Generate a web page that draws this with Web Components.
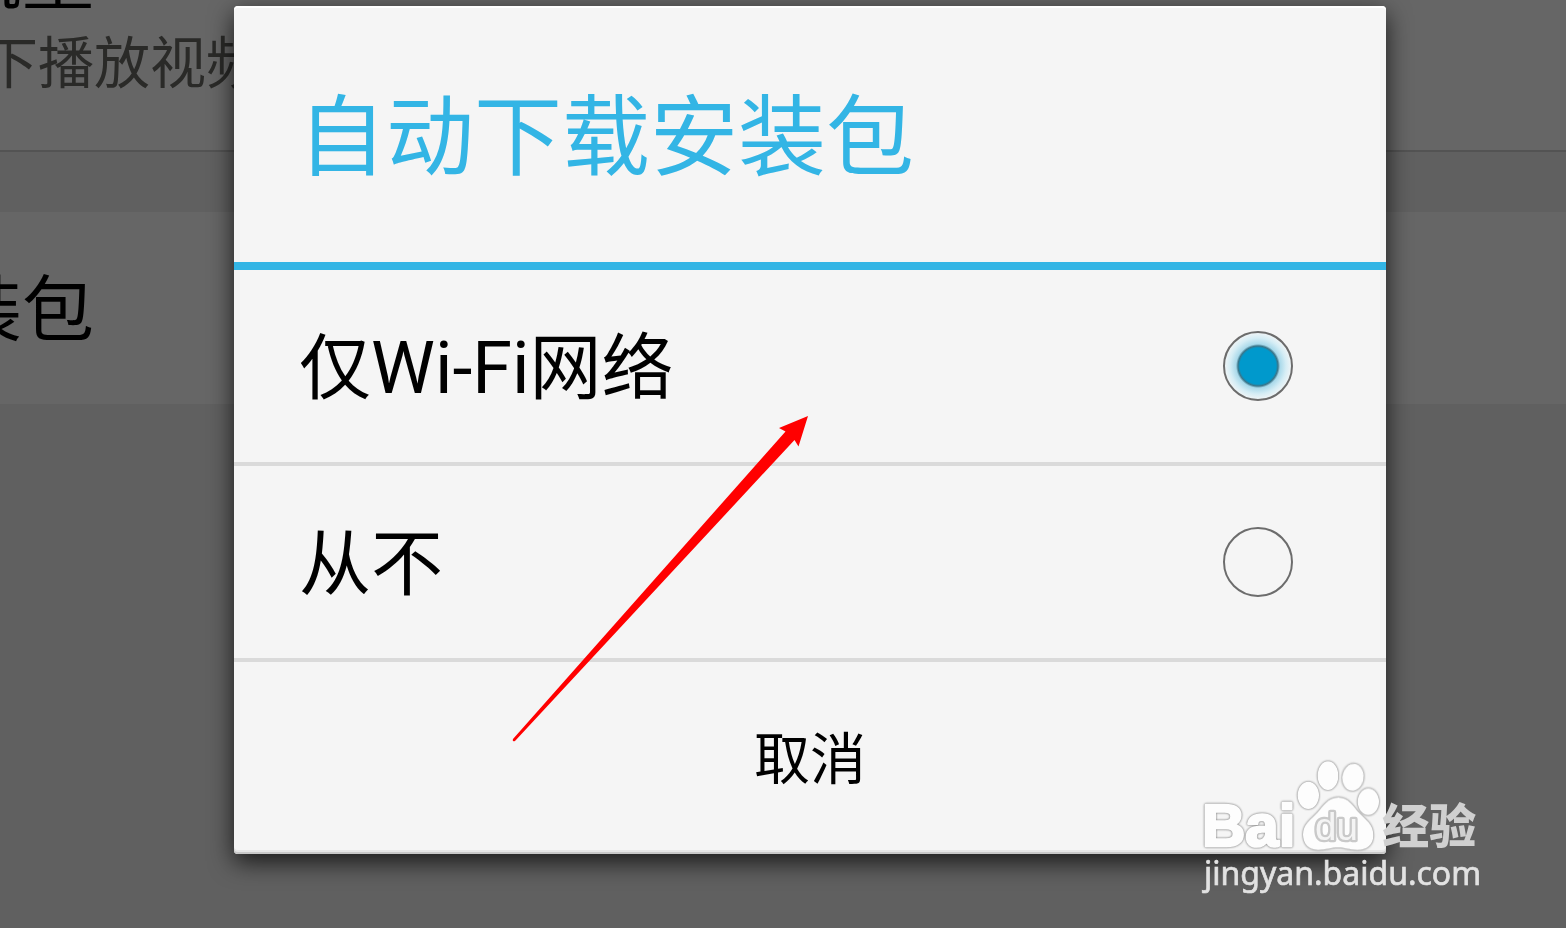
<!DOCTYPE html>
<html lang="zh-CN">
<head>
<meta charset="utf-8">
<title>自动下载安装包</title>
<style>
html, body { height: 100%; margin: 0; }
body {
  background: #606060;
  overflow: hidden;
  font-family: Roboto, "Noto Sans CJK SC", sans-serif;
  color: #000;
}
</style>
</head>
<body>
<app-screen>
  <settings-item slot="page" class="first">
    流量
    <span slot="detail">下播放视频</span>
  </settings-item>
  <settings-item slot="page">装包</settings-item>

  <choice-dialog slot="dialog" heading="自动下载安装包">
    <choice-option label="仅Wi-Fi网络" selected></choice-option>
    <choice-option label="从不"></choice-option>
    <dialog-button slot="actions">取消</dialog-button>
  </choice-dialog>

  <pointer-arrow slot="overlay"></pointer-arrow>
  <site-watermark slot="overlay"></site-watermark>
</app-screen>

<script>
const define = (name, html, setup) => {
  const template = document.createElement('template');
  template.innerHTML = html;
  customElements.define(name, class extends HTMLElement {
    constructor() {
      super();
      this.attachShadow({ mode: 'open' }).append(template.content.cloneNode(true));
    }
    connectedCallback() { if (setup) setup(this, this.shadowRoot); }
  });
};

define('app-screen', `
  <style>
    :host { display: block; position: relative; min-height: 100%; height: 100%; overflow: hidden; }
    main { display: flex; flex-direction: column; gap: 60px; }
    .layer { position: absolute; inset: 0; padding: 6px 180px 0 234px; }
  </style>
  <main><slot name="page"></slot></main>
  <div class="layer"><slot name="dialog"></slot></div>
  <slot name="overlay"></slot>
`);

define('settings-item', `
  <style>
    :host { display: block; background: #666; padding: 63px 0 57px; font-size: 72px; line-height: 72px; white-space: nowrap; }
    :host(.first) { margin-top: -120px; padding-bottom: 56px; border-bottom: 2px solid #535353; }
    .title { margin-left: -50px; }
    .detail { margin: 20px 0 0 -18px; font-size: 56px; line-height: 59px; color: #2a2a28; }
    .detail:not(.used) { display: none; }
  </style>
  <div class="title"><slot></slot></div>
  <div class="detail"><slot name="detail"></slot></div>
`, (host, root) => {
  const detail = root.querySelector('.detail');
  detail.classList.toggle('used', !!host.querySelector('[slot=detail]'));
});

define('choice-dialog', `
  <style>
    :host { display: block; }
    section {
      position: relative; background: #f5f5f5; border-radius: 4px;
      box-shadow: 0 8px 24px rgba(0,0,0,.75), inset 0 -2px #c8c8c8, inset 0 -4px #e6e6e6, inset 0 2px #fff;
    }
    h1 {
      margin: 0; padding: 88px 64px 80px; font-size: 88px; line-height: 88px;
      font-weight: 400; color: #33b5e5; border-bottom: 8px solid #33b5e5;
    }
  </style>
  <section role="dialog" aria-labelledby="heading">
    <h1 id="heading"></h1>
    <slot></slot>
    <slot name="actions"></slot>
  </section>
`, (host, root) => { root.querySelector('h1').textContent = host.getAttribute('heading'); });

define('choice-option', `
  <style>
    :host { display: block; border-bottom: 4px solid #dadada; }
    label {
      display: flex; align-items: center; justify-content: space-between;
      padding: 0 93px 0 65px; font-size: 72px; line-height: 72px;
    }
    span { padding: 63px 0 57px; }
    input {
      appearance: none; box-sizing: border-box; width: 70px; height: 70px; margin: 0;
      border: 2px solid #6c6c6c; border-radius: 50%;
    }
    input:checked {
      background: radial-gradient(circle, #0099cc 18px, #3b7589 20px, #a9d9ea 22px, #d5edf5 28px, #eef4f6 33px);
    }
  </style>
  <label><span></span><input type="radio"></label>
`, (host, root) => {
  root.querySelector('span').textContent = host.getAttribute('label');
  root.querySelector('input').checked = host.hasAttribute('selected');
});

define('dialog-button', `
  <style>
    :host { display: block; }
    button {
      display: block; width: 100%; margin: 0; padding: 66px 0 62px; border: 0; background: none;
      font: inherit; font-size: 56px; line-height: 64px; color: #000;
    }
  </style>
  <button type="button"><slot></slot></button>
`);

define('pointer-arrow', `
  <style>
    :host { position: absolute; left: 508px; top: 412px; pointer-events: none; }
    svg { display: block; }
  </style>
  <svg width="304" height="334" viewBox="508 412 304 334" aria-hidden="true">
    <path d="M513 739L785.500 431.500L779 428L808 416L798.500 446.500L794.500 440L515 741Q512 742 513 739Z" fill="#f00"/>
  </svg>
`);

define('site-watermark', `
  <style>
    :host { position: absolute; left: 1196px; top: 756px; pointer-events: none; }
    svg { display: block; }
    .white { filter: drop-shadow(0 0 3px #888) drop-shadow(0 0 2px #bbb); }
    .brand { font: 700 180px "Liberation Sans", sans-serif; }
    .cn { font: 900 141px "Noto Sans CJK SC", sans-serif; }
    .url { font: 400 96px "Noto Sans", sans-serif; }
    .du { font: 400 116px "Liberation Sans", sans-serif; }
  </style>
  <svg width="290" height="140" viewBox="48 48 870 420">
    <g class="white" fill="#fdfdfd">
      <text class="brand" x="66" y="319" stroke="#fdfdfd" stroke-width="8" stroke-linejoin="round">Bai</text>
      <ellipse cx="385" cy="166" rx="32" ry="41"/>
      <ellipse cx="444" cy="107" rx="31" ry="43"/>
      <ellipse cx="519" cy="112" rx="32" ry="41" transform="rotate(8 519 112)"/>
      <ellipse cx="565" cy="185" rx="32" ry="40"/>
      <path d="M475 172C506 172 519 198 537 218C558 240 580 252 580 286C580 316 560 330 532 330C508 330 494 323 474 323C454 323 438 330 414 330C386 330 369 312 369 284C369 252 392 240 412 218C430 198 444 172 475 172Z"/>
    </g>
    <text class="du" x="405" y="300" fill="#f4f4f4" stroke="#c9c9c9" stroke-width="14" stroke-linejoin="round" paint-order="stroke">du</text>
    <text class="cn" x="607" y="308" fill="#d0d0d0">经验</text>
    <text class="url" x="72" y="434" fill="#e2e2e2" stroke="#e2e2e2" stroke-width="2">jingyan.baidu.com</text>
  </svg>
`);
</script>
</body>
</html>
